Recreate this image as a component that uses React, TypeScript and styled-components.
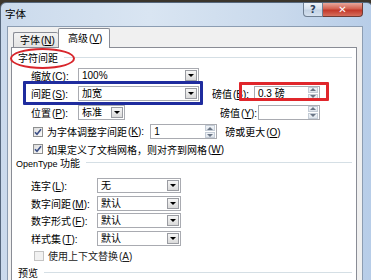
import styled, { createGlobalStyle } from "styled-components";

const GlobalStyle = createGlobalStyle`
  html, body {
    margin: 0;
    padding: 0;
  }
  body {
    background: #3b352c;
    font-family: "Liberation Sans", "Noto Sans CJK SC", sans-serif;
    font-size: 10px;
    color: #000;
  }
`;

const Desktop = styled.div`
  position: relative;
  width: 371px;
  height: 280px;
  overflow: hidden;
  padding-top: 2px;
  box-sizing: border-box;
`;

const Window = styled.div`
  width: 373px;
  height: 300px;
  box-sizing: border-box;
  border: 1px solid #56677c;
  border-radius: 6px 6px 0 0;
  background: linear-gradient(90deg, #cbdaec 0, #d9e5f2 40%, #c9d9ec 75%, #b7cde8 100%);
  display: flex;
  flex-direction: column;
`;

const TitleBar = styled.div`
  height: 23px;
  display: flex;
  align-items: flex-start;
  padding-left: 4px;
`;

const Title = styled.div`
  flex: 1;
  padding-top: 4px;
  font-size: 10.5px;
  line-height: 14px;
`;

const Caption = styled.div`
  display: flex;
  margin-right: 9px;
`;

const CaptionButton = styled.div<{ $close?: boolean }>`
  width: ${({ $close }) => ($close ? 40 : 20)}px;
  height: 14px;
  box-sizing: border-box;
  border: 1px solid ${({ $close }) => ($close ? "#6e3b35" : "#6f7f93")};
  border-top: none;
  border-left: ${({ $close }) => ($close ? "none" : "1px solid #6f7f93")};
  border-radius: ${({ $close }) => ($close ? "0 0 4px 0" : "0 0 0 4px")};
  background: ${({ $close }) =>
    $close
      ? "linear-gradient(180deg, #e8a89c 0, #d3604f 45%, #c2382a 55%, #d66e5c 100%)"
      : "linear-gradient(180deg, #eef3f9 0, #d6e1ee 45%, #c3d2e4 55%, #d5e1ef 100%)"};
  display: flex;
  align-items: center;
  justify-content: center;
  color: ${({ $close }) => ($close ? "#fff" : "#2c3e5a")};
  font-family: "DejaVu Sans", sans-serif;
  font-weight: bold;
  font-size: 10px;
  line-height: 1;
`;

const Client = styled.div`
  flex: 1;
  margin: 0 9px 0 6px;
  border: 1px solid #8c9db2;
  border-bottom: none;
  background: #f0f0f0;
  padding: 1px 5px 0 3px;
  display: flex;
  flex-direction: column;
`;

const TabStrip = styled.div`
  display: flex;
  align-items: flex-end;
  padding-left: 2px;
  position: relative;
  z-index: 1;
  margin-bottom: -1px;
`;

const Tab = styled.div<{ $active?: boolean }>`
  box-sizing: border-box;
  height: ${({ $active }) => ($active ? 20 : 16)}px;
  width: ${({ $active }) => ($active ? 52 : 45)}px;
  padding-left: ${({ $active }) => ($active ? 9 : 6)}px;
  border: 1px solid #898c95;
  border-bottom: ${({ $active }) => ($active ? "none" : "1px solid #898c95")};
  border-right: ${({ $active }) => ($active ? "1px solid #898c95" : "none")};
  border-radius: 2px 2px 0 0;
  background: ${({ $active }) => ($active ? "#fff" : "linear-gradient(180deg, #f3f3f3, #e3e3e3)")};
  display: flex;
  align-items: center;
  white-space: nowrap;
  line-height: 14px;
  padding-top: ${({ $active }) => ($active ? 0 : 1)}px;
`;

const Panel = styled.div`
  flex: 1;
  background: #fff;
  border: 1px solid #898c95;
  border-bottom: none;
  padding: 2px 4px 0 6px;
  display: flex;
  flex-direction: column;
`;

const GroupHead = styled.div<{ $h: number; $mb?: number; $latin?: boolean }>`
  height: ${({ $h }) => $h}px;
  margin-bottom: ${({ $mb }) => $mb ?? 0}px;
  display: flex;
  align-items: center;
  gap: 6px;
  white-space: nowrap;
  font-size: ${({ $latin }) => ($latin ? 9 : 10)}px;
  margin-left: ${({ $latin }) => ($latin ? -2 : 0)}px;
`;

const Rule = styled.div`
  flex: 1;
  height: 1px;
  background: #d5dfe5;
`;

const Row = styled.div<{ $h: number; $mt?: number; $indent?: number }>`
  height: ${({ $h }) => $h}px;
  margin-top: ${({ $mt }) => $mt ?? 0}px;
  display: flex;
  align-items: center;
  padding-left: ${({ $indent }) => $indent ?? 13}px;
  white-space: nowrap;
`;

const Label = styled.div<{ $w: number }>`
  width: ${({ $w }) => $w}px;
  flex: none;
`;

const SideLabel = styled.div<{ $ml: number; $w: number }>`
  margin-left: ${({ $ml }) => $ml}px;
  width: ${({ $w }) => $w}px;
  flex: none;
`;

const ComboBox = styled.div<{ $w: number }>`
  width: ${({ $w }) => $w}px;
  height: 15px;
  box-sizing: border-box;
  border: 1px solid #a9abb1;
  background: #fff;
  display: flex;
  align-items: center;
  padding: 0 1px 0 3px;
  flex: none;
`;

const ComboText = styled.span`
  flex: 1;
  line-height: 13px;
`;

const DropButton = styled.div`
  width: 12px;
  height: 11px;
  box-sizing: border-box;
  border: 1px solid #9a9ca2;
  background: linear-gradient(180deg, #f6f6f6, #dadada);
  display: flex;
  align-items: center;
  justify-content: center;
`;

const Triangle = styled.div<{ $up?: boolean; $c?: string }>`
  width: 0;
  height: 0;
  border-left: 3px solid transparent;
  border-right: 3px solid transparent;
  ${({ $up, $c }) =>
    $up ? `border-bottom: 3px solid ${$c ?? "#000"};` : `border-top: 3px solid ${$c ?? "#000"};`}
`;

const SpinBox = styled.div<{ $w: number; $ml?: number }>`
  width: ${({ $w }) => $w}px;
  margin-left: ${({ $ml }) => $ml ?? 0}px;
  height: 15px;
  box-sizing: border-box;
  border: 1px solid #a9abb1;
  background: #fff;
  display: flex;
  align-items: center;
  padding: 0 1px 0 3px;
  flex: none;
`;

const SpinButtons = styled.div`
  width: 10px;
  height: 13px;
  display: flex;
  flex-direction: column;
  gap: 1px;
`;

const SpinPart = styled.div`
  flex: 1;
  background: linear-gradient(180deg, #f1f4f8, #dfe5ec);
  border: 1px solid #c4ccd6;
  display: flex;
  align-items: center;
  justify-content: center;
`;

const Check = styled.div<{ $disabled?: boolean }>`
  width: 10px;
  height: 10px;
  box-sizing: border-box;
  border: 1px solid ${({ $disabled }) => ($disabled ? "#c3c3c3" : "#8e8f8f")};
  background: ${({ $disabled }) => ($disabled ? "#f1f1f1" : "linear-gradient(135deg, #dcdcdc, #fbfbfb)")};
  margin-right: 4px;
  flex: none;
  display: flex;
  align-items: center;
  justify-content: center;
`;

const Muted = styled.span`
  color: #222;
`;

const Paren = styled.span`
  margin-left: 1px;
`;

const Note = styled.div<{ $ml: number }>`
  margin-left: ${({ $ml }) => $ml}px;
`;

const Mark = styled.div<{ $x: number; $y: number; $w: number; $h: number; $c: string; $round?: boolean }>`
  position: absolute;
  left: ${({ $x }) => $x}px;
  top: ${({ $y }) => $y}px;
  width: ${({ $w }) => $w}px;
  height: ${({ $h }) => $h}px;
  box-sizing: border-box;
  border: ${({ $round }) => ($round ? 2.5 : 3)}px solid ${({ $c }) => $c};
  border-radius: ${({ $round }) => ($round ? "50%" : "1px")};
  pointer-events: none;
`;

const Key = ({ t, k, colon = true }: { t: string; k: string; colon?: boolean }) => (
  <>
    {t}
    <Paren>
      (<u>{k}</u>){colon ? ":" : ""}
    </Paren>
  </>
);

const Combo = ({ w, value }: { w: number; value: string }) => (
  <ComboBox $w={w}>
    <ComboText>{value}</ComboText>
    <DropButton>
      <Triangle />
    </DropButton>
  </ComboBox>
);

const Spin = ({ w, ml, value }: { w: number; ml?: number; value?: string }) => (
  <SpinBox $w={w} $ml={ml}>
    <ComboText>{value}</ComboText>
    <SpinButtons>
      <SpinPart>
        <Triangle $up $c="#6b7686" />
      </SpinPart>
      <SpinPart>
        <Triangle $c="#6b7686" />
      </SpinPart>
    </SpinButtons>
  </SpinBox>
);

const Tick = () => (
  <svg width="8" height="8" viewBox="0 0 8 8">
    <path d="M1 4.2 L3 6.3 L7 1.3" fill="none" stroke="#3b4f86" strokeWidth="1.6" />
  </svg>
);

const App = () => (
  <>
    <GlobalStyle />
    <Desktop>
      <Window>
        <TitleBar>
          <Title>字体</Title>
          <Caption>
            <CaptionButton>?</CaptionButton>
            <CaptionButton $close>✕</CaptionButton>
          </Caption>
        </TitleBar>
        <Client>
          <TabStrip>
            <Tab>
              <Key t="字体" k="N" colon={false} />
            </Tab>
            <Tab $active>
              <Key t="高级" k="V" colon={false} />
            </Tab>
          </TabStrip>
          <Panel>
            <GroupHead $h={14}>
              字符间距
              <Rule />
            </GroupHead>
            <Row $h={18} $mt={2}>
              <Label $w={47}>
                <Key t="缩放" k="C" />
              </Label>
              <Combo w={121} value="100%" />
            </Row>
            <Row $h={18}>
              <Label $w={47}>
                <Key t="间距" k="S" />
              </Label>
              <Combo w={121} value="加宽" />
              <SideLabel $ml={13} $w={42}>
                <Key t="磅值" k="B" />
              </SideLabel>
              <Spin w={66} value="0.3 磅" />
            </Row>
            <Row $h={20}>
              <Label $w={47}>
                <Key t="位置" k="P" />
              </Label>
              <Combo w={47} value="标准" />
              <SideLabel $ml={95} $w={38}>
                <Key t="磅值" k="Y" />
              </SideLabel>
              <Spin w={62} />
            </Row>
            <Row $h={19} $indent={15}>
              <Check>
                <Tick />
              </Check>
              <Key t="为字体调整字间距" k="K" />
              <Spin w={67} ml={6} value="1" />
              <Note $ml={8}>
                <Key t="磅或更大" k="O" colon={false} />
              </Note>
            </Row>
            <Row $h={16} $indent={15}>
              <Check>
                <Tick />
              </Check>
              <Key t="如果定义了文档网格，则对齐到网格" k="W" colon={false} />
            </Row>
            <GroupHead $h={10} $mb={9} $latin>
              <span>
                OpenType <span style={{ fontSize: 10 }}>功能</span>
              </span>
              <Rule />
            </GroupHead>
            <Row $h={18}>
              <Label $w={66}>
                <Key t="连字" k="L" />
              </Label>
              <Combo w={84} value="无" />
            </Row>
            <Row $h={18}>
              <Label $w={66}>
                <Key t="数字间距" k="M" />
              </Label>
              <Combo w={84} value="默认" />
            </Row>
            <Row $h={17}>
              <Label $w={66}>
                <Key t="数字形式" k="F" />
              </Label>
              <Combo w={84} value="默认" />
            </Row>
            <Row $h={19}>
              <Label $w={66}>
                <Key t="样式集" k="T" />
              </Label>
              <Combo w={84} value="默认" />
            </Row>
            <Row $h={15} $indent={16}>
              <Check $disabled />
              <Muted>
                <Key t="使用上下文替换" k="A" colon={false} />
              </Muted>
            </Row>
            <GroupHead $h={19}>
              预览
              <Rule />
            </GroupHead>
          </Panel>
        </Client>
      </Window>
      <Mark $x={10} $y={48} $w={65} $h={21} $c="#d8262c" $round />
      <Mark $x={23} $y={81} $w={180} $h={24} $c="#1f2c9e" />
      <Mark $x={239} $y={82} $w={90} $h={19} $c="#e0262b" />
    </Desktop>
  </>
);

export default App;
